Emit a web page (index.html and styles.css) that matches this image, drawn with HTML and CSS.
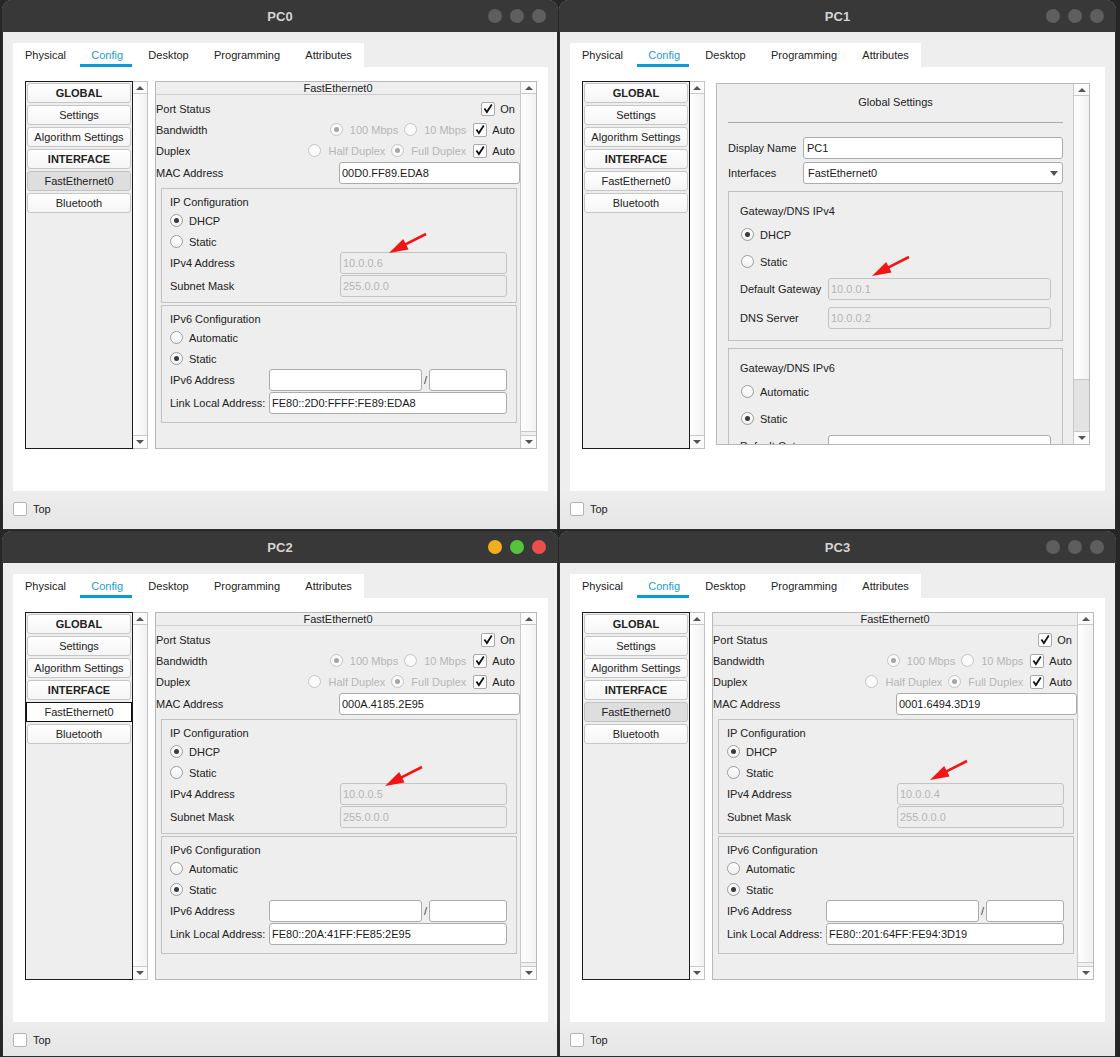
FILE: index.html
```html
<!DOCTYPE html>
<html>
<head>
<meta charset="utf-8">
<link rel="stylesheet" href="styles.css">
</head>
<body>
<div class="desk">

<!-- PC0 -->
<div class="win">
  <div class="titlebar"><span class="title">PC0</span><div class="lights"><i class="light"></i><i class="light"></i><i class="light"></i></div></div>
  <div class="body">
    <div class="tabs"><span class="tab">Physical</span><span class="tab active">Config</span><span class="tab">Desktop</span><span class="tab">Programming</span><span class="tab">Attributes</span></div>
    <div class="panel">
      <div class="nav">
        <div class="navlist">
          <div class="navitem b">GLOBAL</div>
          <div class="navitem">Settings</div>
          <div class="navitem">Algorithm Settings</div>
          <div class="navitem b">INTERFACE</div>
          <div class="navitem sel">FastEthernet0</div>
          <div class="navitem">Bluetooth</div>
        </div>
        <div class="vscroll"><div class="arr up"><i></i></div><div class="track"></div><div class="arr down"><i></i></div></div>
      </div>
      <div class="rpanel">
        <div class="rcontent">
          <div class="hdr">FastEthernet0</div>
          <div class="row first"><span class="lbl">Port Status</span><span class="opts"><span class="cb"><svg viewBox="0 0 13 13" width="13" height="13"><path d="M2.6 6.6 L5.3 10.4 L10.6 2.2" fill="none" stroke="#111" stroke-width="1.9"/></svg></span><span class="ot">On</span></span></div>
          <div class="row"><span class="lbl">Bandwidth</span><span class="opts"><span class="rd dis on"></span><span class="ot dim">100 Mbps</span><span class="rd dis"></span><span class="ot dim">10 Mbps</span><span class="cb"><svg viewBox="0 0 13 13" width="13" height="13"><path d="M2.6 6.6 L5.3 10.4 L10.6 2.2" fill="none" stroke="#111" stroke-width="1.9"/></svg></span><span class="ot">Auto</span></span></div>
          <div class="row"><span class="lbl">Duplex</span><span class="opts"><span class="rd dis"></span><span class="ot dim">Half Duplex</span><span class="rd dis on"></span><span class="ot dim">Full Duplex</span><span class="cb"><svg viewBox="0 0 13 13" width="13" height="13"><path d="M2.6 6.6 L5.3 10.4 L10.6 2.2" fill="none" stroke="#111" stroke-width="1.9"/></svg></span><span class="ot">Auto</span></span></div>
          <div class="row mac"><span class="lbl maclbl">MAC Address</span><div class="inp">00D0.FF89.EDA8</div></div>
          <div class="group">
            <div class="gtitle">IP Configuration</div>
            <div class="grow"><span class="rd on"></span><span class="rt">DHCP</span></div>
            <div class="grow"><span class="rd"></span><span class="rt">Static</span></div>
            <div class="frow"><span class="glbl">IPv4 Address</span><div class="inp dis">10.0.0.6</div></div>
            <div class="frow mt1"><span class="glbl">Subnet Mask</span><div class="inp dis">255.0.0.0</div></div>
          </div>
          <div class="group g6">
            <div class="gtitle">IPv6 Configuration</div>
            <div class="grow"><span class="rd"></span><span class="rt">Automatic</span></div>
            <div class="grow"><span class="rd on"></span><span class="rt">Static</span></div>
            <div class="frow"><span class="glbl6">IPv6 Address</span><div class="inp w153"></div><span class="slash">/</span><div class="inp"></div></div>
            <div class="frow mt1"><span class="glbl6">Link Local Address:</span><div class="inp">FE80::2D0:FFFF:FE89:EDA8</div></div>
          </div>
        </div>
        <div class="rscroll"><div class="arr up"><i></i></div><div class="track"></div><div class="rest"></div><div class="arr down"><i></i></div></div>
      </div>
    </div>
    <div class="footer"><span class="topcb"></span><span>Top</span></div>
  </div>
  <svg class="amark am0" width="50" height="34" viewBox="0 0 50 34"><line x1="44" y1="8" x2="23" y2="18.6" stroke="#f41414" stroke-width="2.6"/><polygon points="7,27 26.6,23.6 21.2,13" fill="#f41414"/></svg>
</div>

<!-- PC1 -->
<div class="win">
  <div class="titlebar"><span class="title">PC1</span><div class="lights"><i class="light"></i><i class="light"></i><i class="light"></i></div></div>
  <div class="body">
    <div class="tabs"><span class="tab">Physical</span><span class="tab active">Config</span><span class="tab">Desktop</span><span class="tab">Programming</span><span class="tab">Attributes</span></div>
    <div class="panel">
      <div class="nav">
        <div class="navlist">
          <div class="navitem b">GLOBAL</div>
          <div class="navitem">Settings</div>
          <div class="navitem">Algorithm Settings</div>
          <div class="navitem b">INTERFACE</div>
          <div class="navitem">FastEthernet0</div>
          <div class="navitem">Bluetooth</div>
        </div>
        <div class="vscroll"><div class="arr up"><i></i></div><div class="track"></div><div class="arr down"><i></i></div></div>
      </div>
      <div class="rpanel gsp">
        <div class="rcontent gs">
          <div class="gs-title">Global Settings</div>
          <div class="gs-sep"></div>
          <div class="frow mt14"><span class="dlbl">Display Name</span><div class="inp pad3">PC1</div></div>
          <div class="frow mt3"><span class="dlbl">Interfaces</span><div class="inp select">FastEthernet0<i class="dd"></i></div></div>
          <div class="group2">
            <div class="gtitle">Gateway/DNS IPv4</div>
            <div class="rrow"><span class="rd on"></span><span class="rt">DHCP</span></div>
            <div class="rrow"><span class="rd"></span><span class="rt">Static</span></div>
            <div class="frow mt3"><span class="g2lbl">Default Gateway</span><div class="inp dis">10.0.0.1</div></div>
            <div class="frow mt7"><span class="g2lbl">DNS Server</span><div class="inp dis">10.0.0.2</div></div>
          </div>
          <div class="group2">
            <div class="gtitle">Gateway/DNS IPv6</div>
            <div class="rrow"><span class="rd"></span><span class="rt">Automatic</span></div>
            <div class="rrow"><span class="rd on"></span><span class="rt">Static</span></div>
            <div class="frow mt3"><span class="g2lbl">Default Gateway</span><div class="inp"></div></div>
          </div>
        </div>
        <div class="rscroll"><div class="arr up"><i></i></div><div class="track"></div><div class="thumb"></div><div class="arr down"><i></i></div></div>
      </div>
    </div>
    <div class="footer"><span class="topcb"></span><span>Top</span></div>
  </div>
  <svg class="amark am1" width="50" height="34" viewBox="0 0 50 34"><line x1="44" y1="8" x2="23" y2="18.6" stroke="#f41414" stroke-width="2.6"/><polygon points="7,27 26.6,23.6 21.2,13" fill="#f41414"/></svg>
</div>

<!-- PC2 -->
<div class="win">
  <div class="titlebar"><span class="title">PC2</span><div class="lights"><i class="light yel"></i><i class="light grn"></i><i class="light red"></i></div></div>
  <div class="body">
    <div class="tabs"><span class="tab">Physical</span><span class="tab active">Config</span><span class="tab">Desktop</span><span class="tab">Programming</span><span class="tab">Attributes</span></div>
    <div class="panel">
      <div class="nav">
        <div class="navlist">
          <div class="navitem b">GLOBAL</div>
          <div class="navitem">Settings</div>
          <div class="navitem">Algorithm Settings</div>
          <div class="navitem b">INTERFACE</div>
          <div class="navitem focus">FastEthernet0</div>
          <div class="navitem">Bluetooth</div>
        </div>
        <div class="vscroll"><div class="arr up"><i></i></div><div class="track"></div><div class="arr down"><i></i></div></div>
      </div>
      <div class="rpanel">
        <div class="rcontent">
          <div class="hdr">FastEthernet0</div>
          <div class="row first"><span class="lbl">Port Status</span><span class="opts"><span class="cb"><svg viewBox="0 0 13 13" width="13" height="13"><path d="M2.6 6.6 L5.3 10.4 L10.6 2.2" fill="none" stroke="#111" stroke-width="1.9"/></svg></span><span class="ot">On</span></span></div>
          <div class="row"><span class="lbl">Bandwidth</span><span class="opts"><span class="rd dis on"></span><span class="ot dim">100 Mbps</span><span class="rd dis"></span><span class="ot dim">10 Mbps</span><span class="cb"><svg viewBox="0 0 13 13" width="13" height="13"><path d="M2.6 6.6 L5.3 10.4 L10.6 2.2" fill="none" stroke="#111" stroke-width="1.9"/></svg></span><span class="ot">Auto</span></span></div>
          <div class="row"><span class="lbl">Duplex</span><span class="opts"><span class="rd dis"></span><span class="ot dim">Half Duplex</span><span class="rd dis on"></span><span class="ot dim">Full Duplex</span><span class="cb"><svg viewBox="0 0 13 13" width="13" height="13"><path d="M2.6 6.6 L5.3 10.4 L10.6 2.2" fill="none" stroke="#111" stroke-width="1.9"/></svg></span><span class="ot">Auto</span></span></div>
          <div class="row mac"><span class="lbl maclbl">MAC Address</span><div class="inp">000A.4185.2E95</div></div>
          <div class="group">
            <div class="gtitle">IP Configuration</div>
            <div class="grow"><span class="rd on"></span><span class="rt">DHCP</span></div>
            <div class="grow"><span class="rd"></span><span class="rt">Static</span></div>
            <div class="frow"><span class="glbl">IPv4 Address</span><div class="inp dis">10.0.0.5</div></div>
            <div class="frow mt1"><span class="glbl">Subnet Mask</span><div class="inp dis">255.0.0.0</div></div>
          </div>
          <div class="group g6">
            <div class="gtitle">IPv6 Configuration</div>
            <div class="grow"><span class="rd"></span><span class="rt">Automatic</span></div>
            <div class="grow"><span class="rd on"></span><span class="rt">Static</span></div>
            <div class="frow"><span class="glbl6">IPv6 Address</span><div class="inp w153"></div><span class="slash">/</span><div class="inp"></div></div>
            <div class="frow mt1"><span class="glbl6">Link Local Address:</span><div class="inp">FE80::20A:41FF:FE85:2E95</div></div>
          </div>
        </div>
        <div class="rscroll"><div class="arr up"><i></i></div><div class="track"></div><div class="rest"></div><div class="arr down"><i></i></div></div>
      </div>
    </div>
    <div class="footer"><span class="topcb"></span><span>Top</span></div>
  </div>
  <svg class="amark am2" width="50" height="34" viewBox="0 0 50 34"><line x1="44" y1="8" x2="23" y2="18.6" stroke="#f41414" stroke-width="2.6"/><polygon points="7,27 26.6,23.6 21.2,13" fill="#f41414"/></svg>
</div>

<!-- PC3 -->
<div class="win">
  <div class="titlebar"><span class="title">PC3</span><div class="lights"><i class="light"></i><i class="light"></i><i class="light"></i></div></div>
  <div class="body">
    <div class="tabs"><span class="tab">Physical</span><span class="tab active">Config</span><span class="tab">Desktop</span><span class="tab">Programming</span><span class="tab">Attributes</span></div>
    <div class="panel">
      <div class="nav">
        <div class="navlist">
          <div class="navitem b">GLOBAL</div>
          <div class="navitem">Settings</div>
          <div class="navitem">Algorithm Settings</div>
          <div class="navitem b">INTERFACE</div>
          <div class="navitem sel">FastEthernet0</div>
          <div class="navitem">Bluetooth</div>
        </div>
        <div class="vscroll"><div class="arr up"><i></i></div><div class="track"></div><div class="arr down"><i></i></div></div>
      </div>
      <div class="rpanel">
        <div class="rcontent">
          <div class="hdr">FastEthernet0</div>
          <div class="row first"><span class="lbl">Port Status</span><span class="opts"><span class="cb"><svg viewBox="0 0 13 13" width="13" height="13"><path d="M2.6 6.6 L5.3 10.4 L10.6 2.2" fill="none" stroke="#111" stroke-width="1.9"/></svg></span><span class="ot">On</span></span></div>
          <div class="row"><span class="lbl">Bandwidth</span><span class="opts"><span class="rd dis on"></span><span class="ot dim">100 Mbps</span><span class="rd dis"></span><span class="ot dim">10 Mbps</span><span class="cb"><svg viewBox="0 0 13 13" width="13" height="13"><path d="M2.6 6.6 L5.3 10.4 L10.6 2.2" fill="none" stroke="#111" stroke-width="1.9"/></svg></span><span class="ot">Auto</span></span></div>
          <div class="row"><span class="lbl">Duplex</span><span class="opts"><span class="rd dis"></span><span class="ot dim">Half Duplex</span><span class="rd dis on"></span><span class="ot dim">Full Duplex</span><span class="cb"><svg viewBox="0 0 13 13" width="13" height="13"><path d="M2.6 6.6 L5.3 10.4 L10.6 2.2" fill="none" stroke="#111" stroke-width="1.9"/></svg></span><span class="ot">Auto</span></span></div>
          <div class="row mac"><span class="lbl maclbl">MAC Address</span><div class="inp">0001.6494.3D19</div></div>
          <div class="group">
            <div class="gtitle">IP Configuration</div>
            <div class="grow"><span class="rd on"></span><span class="rt">DHCP</span></div>
            <div class="grow"><span class="rd"></span><span class="rt">Static</span></div>
            <div class="frow"><span class="glbl">IPv4 Address</span><div class="inp dis">10.0.0.4</div></div>
            <div class="frow mt1"><span class="glbl">Subnet Mask</span><div class="inp dis">255.0.0.0</div></div>
          </div>
          <div class="group g6">
            <div class="gtitle">IPv6 Configuration</div>
            <div class="grow"><span class="rd"></span><span class="rt">Automatic</span></div>
            <div class="grow"><span class="rd on"></span><span class="rt">Static</span></div>
            <div class="frow"><span class="glbl6">IPv6 Address</span><div class="inp w153"></div><span class="slash">/</span><div class="inp"></div></div>
            <div class="frow mt1"><span class="glbl6">Link Local Address:</span><div class="inp">FE80::201:64FF:FE94:3D19</div></div>
          </div>
        </div>
        <div class="rscroll"><div class="arr up"><i></i></div><div class="track"></div><div class="rest"></div><div class="arr down"><i></i></div></div>
      </div>
    </div>
    <div class="footer"><span class="topcb"></span><span>Top</span></div>
  </div>
  <svg class="amark am3" width="50" height="34" viewBox="0 0 50 34"><line x1="44" y1="8" x2="23" y2="18.6" stroke="#f41414" stroke-width="2.6"/><polygon points="7,27 26.6,23.6 21.2,13" fill="#f41414"/></svg>
</div>

</div>
</body>
</html>
```

FILE: styles.css
```css
* { box-sizing: border-box; }
html, body { margin: 0; padding: 0; }
body {
  width: 1120px;
  height: 1057px;
  overflow: hidden;
  background: #262626;
  font-family: "Liberation Sans", Arial, sans-serif;
  font-size: 11px;
  color: #222;
}
.desk {
  display: grid;
  grid-template-columns: 556px 557px;
  grid-template-rows: 530px 526px;
  column-gap: 1px;
  row-gap: 1px;
  padding-left: 2px;
}
.win {
  position: relative;
  background: linear-gradient(#eeeeee 0, #eeeeee 92%, #e6e6e6 100%);
  border-radius: 10px 10px 0 0;
  overflow: hidden;
  display: flex;
  flex-direction: column;
  box-shadow: inset 0 0 0 1px #2e2e2e;
}
.titlebar {
  height: 32px;
  flex: none;
  background: #383838;
  display: flex;
  align-items: center;
  justify-content: center;
  position: relative;
}
.title { color: #d4d4d4; font-weight: bold; font-size: 13px; }
.lights { position: absolute; right: 12px; top: 9px; display: flex; gap: 8px; }
.light { display: block; width: 14px; height: 14px; border-radius: 50%; background: #5e5e5e; }
.light.yel { background: #f2ae1e; }
.light.grn { background: #56c33a; }
.light.red { background: #ea5049; }

.body { padding: 11px 10px 0 11px; display: flex; flex-direction: column; }
.tabs { display: flex; background: #fff; align-self: flex-start; height: 24px; }
.tab { padding: 0 12.5px 0 12px; line-height: 24px; position: relative; color: #222; }
.tab:first-child { padding-left: 12px; }
.tab.active { color: #1c9bd6; }
.tab.active::after {
  content: ""; position: absolute; left: 1px; right: 4px; bottom: 0; height: 3px; background: #0b9ad6;
}
.tab + .tab { margin-left: 0.8px; }
.panel { width: 535px; background: #fff; height: 424px; padding: 14px 0 0 12px; display: flex; }
.footer { display: flex; align-items: center; height: 36px; gap: 6px; color: #222; }
.topcb { width: 14px; height: 14px; background: #fff; border: 1px solid #b4b4b4; border-radius: 2px; }

/* nav list */
.nav { width: 123px; height: 368px; display: flex; flex: none; }
.navlist {
  width: 108px; border: 1px solid #1c1c1c; background: #eeeeee;
  padding: 1px; display: flex; flex-direction: column; gap: 2px;
}
.navitem {
  height: 20px; border: 1px solid #c6c6c6; border-radius: 3px;
  background: linear-gradient(#ffffff, #f5f5f5);
  text-align: center; line-height: 18px; color: #222; white-space: nowrap;
}
.navitem.b { font-weight: bold; }
.navitem.sel { background: #dedede; border-color: #c2c2c2; }
.navitem.focus { border: 1px solid #111; border-radius: 0; margin: 0 -1px; background: #fff; }

.vscroll, .rscroll {
  display: flex; flex-direction: column;
  background: linear-gradient(90deg, #ffffff, #f2f2f2);
}
.vscroll { width: 15px; border: 1px solid #c2c2c2; border-left: none; }
.rscroll { width: 16px; border-left: 1px solid #c8c8c8; flex: none; }
.arr { height: 12px; flex: none; display: flex; align-items: center; justify-content: center; background: #fbfbfb; }
.arr.up { border-bottom: 1px solid #cacaca; }
.arr.down { border-top: 1px solid #cacaca; height: 13px; }
.arr i { display: block; width: 0; height: 0; border-left: 4px solid transparent; border-right: 4px solid transparent; }
.arr.up i { border-bottom: 4px solid #555; }
.arr.down i { border-top: 4px solid #555; }
.track { flex: 1; }
.rest { height: 4px; border-top: 1px solid #cacaca; background: #f0f0f0; flex: none; }
.thumb { height: 52px; flex: none; border-top: 1px solid #c8c8c8; background: #e3e3e3; }

/* right panel */
.rpanel {
  width: 382px; height: 368px; margin-left: 7px; flex: none;
  border: 1px solid #b9b9b9; background: #eeeeee; display: flex;
}
.rcontent { flex: 1; display: flex; flex-direction: column; overflow: hidden; min-width: 0; }
.hdr { height: 13px; flex: none; border-bottom: 1px solid #cbcbcb; text-align: center; line-height: 12px; color: #222; }
.row { height: 21px; flex: none; display: flex; align-items: center; }
.row.first { margin-top: 3px; }
.row.mac { height: 23px; }
.lbl { flex: 1; color: #222; }
.maclbl { flex: none; width: 183px; }
.opts { display: flex; align-items: center; padding-right: 5px; }
.ot { white-space: nowrap; color: #222; }
.ot.dim { color: #b6b6b6; }
.rd + .ot { margin-left: 7px; }
.ot + .rd { margin-left: 6px; }
.ot + .cb { margin-left: 7px; }
.cb + .ot { margin-left: 5px; }

.cb {
  width: 14px; height: 14px; flex: none; background: #fff; border: 1px solid #a9a9a9; border-radius: 2px;
  display: flex; align-items: center; justify-content: center;
}
.cb svg { display: block; }
.rd {
  width: 13px; height: 13px; flex: none; border-radius: 50%;
  border: 1px solid #9d9d9d; background: linear-gradient(#ffffff, #f1f1f1);
  display: flex; align-items: center; justify-content: center;
}
.rd.on::after { content: ""; width: 5px; height: 5px; border-radius: 50%; background: #3a3a3a; }
.rd.dis { border-color: #c4c4c4; background: #fafafa; }
.rd.dis.on::after { background: #a5a5a5; }
.rt { margin-left: 6px; color: #222; }

.inp {
  height: 22px; flex: 1; min-width: 0; border: 1px solid #acacac; border-radius: 3px;
  background: #fff; padding-left: 2px; line-height: 20px; white-space: nowrap; overflow: hidden; color: #1a1a1a;
}
.inp.dis { background: #ededed; border-color: #c3c3c3; color: #b5b5b5; }
.inp.pad3 { padding-left: 3px; }
.inp.w153 { flex: none; width: 153px; }
.slash { width: 7px; text-align: center; flex: none; color: #444; }

.group {
  flex: none; margin: 4px 3px 0 5px; border: 1px solid #c2c2c2;
  padding: 5px 9px 5px 8px;
}
.group.g6 { margin-top: 2px; padding-bottom: 8px; }
.gtitle { height: 16px; line-height: 16px; color: #222; }
.grow { height: 21px; display: flex; align-items: center; }
.frow { height: 22px; display: flex; align-items: center; flex: none; }
.mt1 { margin-top: 1px; }
.mt3 { margin-top: 3px; }
.mt7 { margin-top: 7px; }
.mt14 { margin-top: 14px; }
.glbl { width: 170px; flex: none; }
.glbl6 { width: 99px; flex: none; white-space: nowrap; }

/* PC1 global settings */
.rpanel.gsp { width: 374px; height: 362px; margin-left: 11px; margin-top: 2px; }
.gs { padding: 0 10px 0 11px; }
.gs-title { margin-top: 10px; height: 16px; line-height: 16px; text-align: center; flex: none; }
.gs-sep { margin-top: 12px; height: 1px; background: #aaaaaa; flex: none; }
.dlbl { width: 75px; flex: none; }
.inp.select { position: relative; padding-left: 4px; }
.dd {
  position: absolute; right: 4px; top: 8px; width: 0; height: 0;
  border-left: 4.5px solid transparent; border-right: 4.5px solid transparent; border-top: 5px solid #555;
}
.group2 { flex: none; margin-top: 7px; border: 1px solid #bfbfbf; padding: 11px; }
.group2 .gtitle { margin-bottom: 2px; }
.rrow { height: 27px; display: flex; align-items: center; }
.rrow .rd { margin-left: 1px; }
.g2lbl { width: 88px; flex: none; white-space: nowrap; }

/* red annotation arrows */
.amark { position: absolute; }
.am0 { left: 380px; top: 226px; }
.am1 { left: 306px; top: 249px; }
.am2 { left: 376px; top: 228px; }
.am3 { left: 364px; top: 222px; }
```
